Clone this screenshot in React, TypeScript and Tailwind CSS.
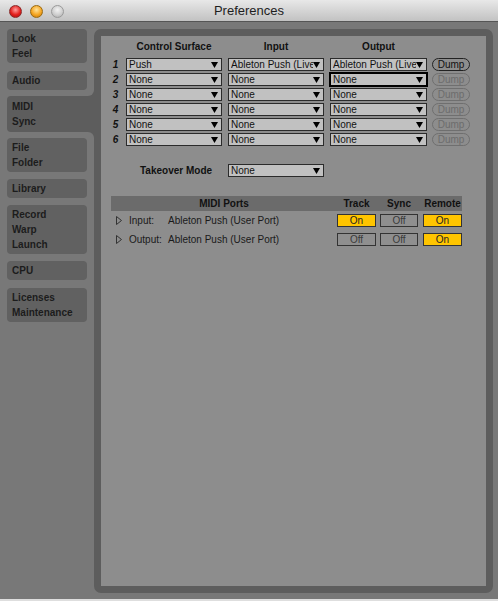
import clsx from "clsx";

const font = "font-['Liberation_Sans',Arial,sans-serif]";

function Arrow() {
  return (
    <svg width="7" height="6" viewBox="0 0 7 6" className="shrink-0">
      <polygon points="0,0 7,0 3.5,6" fill="#000" />
    </svg>
  );
}

function Select({ value, w, focused }: { value: string; w: string; focused?: boolean }) {
  return (
    <div
      className={clsx(
        "flex h-[13px] items-center border bg-[#c1c1c1] pl-[2px] pr-[3px]",
        w,
        focused ? "border-black outline outline-1 outline-black" : "border-[#2b2b2b]"
      )}
    >
      <span className="flex-1 overflow-hidden whitespace-nowrap text-[10px] leading-[11px] text-[#111]">
        {value}
      </span>
      <Arrow />
    </div>
  );
}

function Dump({ active }: { active?: boolean }) {
  return (
    <div
      className={clsx(
        "flex h-[13px] w-[38px] items-center justify-center rounded-full border text-[10px] leading-[11px]",
        active ? "border-[#222] text-[#111]" : "border-[#6f6f6f] text-[#6c6c6c]"
      )}
    >
      Dump
    </div>
  );
}

function Toggle({ on, w }: { on: boolean; w: string }) {
  return (
    <div
      className={clsx(
        "flex h-[13px] items-center justify-center border border-[#333] text-[10px] leading-[11px]",
        w,
        on ? "bg-[#ffc500] text-[#222]" : "bg-[#8f8f8f] text-[#3a3a3a]"
      )}
    >
      {on ? "On" : "Off"}
    </div>
  );
}

function Tab({ lines, className }: { lines: string[]; className?: string }) {
  return (
    <div
      className={clsx(
        "w-[80px] rounded-[4px] bg-[#616161] px-[5px] py-[2px] text-[10px] font-bold leading-[15px] text-[#1c1c1c]",
        className
      )}
    >
      {lines.map((l) => (
        <div key={l}>{l}</div>
      ))}
    </div>
  );
}

const surfaces = [
  { n: 1, cs: "Push", input: "Ableton Push (Live Port)", output: "Ableton Push (Live Port)" },
  { n: 2, cs: "None", input: "None", output: "None" },
  { n: 3, cs: "None", input: "None", output: "None" },
  { n: 4, cs: "None", input: "None", output: "None" },
  { n: 5, cs: "None", input: "None", output: "None" },
  { n: 6, cs: "None", input: "None", output: "None" },
];

const ports = [
  { label: "Input:", name: "Ableton Push (User Port)", track: true, sync: false, remote: true },
  { label: "Output:", name: "Ableton Push (User Port)", track: false, sync: false, remote: true },
];

export default function App() {
  return (
    <div className={clsx("flex h-[601px] w-[498px] flex-col overflow-hidden bg-[#787878]", font)}>
      {/* Title bar */}
      <div className="grid h-[22px] shrink-0 grid-cols-[1fr_auto_1fr] items-center border-b border-[#555] bg-gradient-to-b from-[#e8e8e8] to-[#c2c2c2]">
        <div className="flex items-center gap-[8px] pl-[9px] pt-[2px]">
          <div className="h-[13px] w-[13px] rounded-full border border-[#8a2a2a] bg-[radial-gradient(circle_at_50%_35%,#ff9d9d,#e3201d_55%,#a50d0b)]" />
          <div className="h-[13px] w-[13px] rounded-full border border-[#9a6a10] bg-[radial-gradient(circle_at_50%_35%,#ffe39a,#f5a623_55%,#c07208)]" />
          <div className="h-[13px] w-[13px] rounded-full border border-[#9a9a9a] bg-[radial-gradient(circle_at_50%_35%,#f2f2f2,#cfcfcf_55%,#a9a9a9)]" />
        </div>
        <div className="text-[13px] leading-[21px] text-[#1e1e1e]">Preferences</div>
        <div />
      </div>

      {/* Body */}
      <div className="flex flex-1 pt-[7px]">
        {/* Sidebar */}
        <div className="flex w-[94px] shrink-0 flex-col pl-[7px]">
          <Tab lines={["Look", "Feel"]} />
          <Tab lines={["Audio"]} className="mt-[8px]" />
          <div className="relative mt-[6px] h-[36px] w-[87px] rounded-l-[4px] bg-[#5d5d5d] px-[5px] pt-[3px] text-[10px] font-bold leading-[15px] text-[#1c1c1c]">
            <div className="absolute right-0 top-[-6px] h-[6px] w-[6px] bg-[#5d5d5d]">
              <div className="h-full w-full rounded-br-[6px] bg-[#787878]" />
            </div>
            <div className="absolute bottom-[-6px] right-0 h-[6px] w-[6px] bg-[#5d5d5d]">
              <div className="h-full w-full rounded-tr-[6px] bg-[#787878]" />
            </div>
            <div>MIDI</div>
            <div>Sync</div>
          </div>
          <Tab lines={["File", "Folder"]} className="mt-[6px]" />
          <Tab lines={["Library"]} className="mt-[7px]" />
          <Tab lines={["Record", "Warp", "Launch"]} className="mt-[7px]" />
          <Tab lines={["CPU"]} className="mt-[7px]" />
          <Tab lines={["Licenses", "Maintenance"]} className="mt-[8px]" />
        </div>

        {/* Panel */}
        <div className="flex flex-1 flex-col">
          <div className="mr-[5px] h-[564px] rounded-[7px] border-[7px] border-[#5d5d5d] bg-[#8d8d8d]">
            {/* Control surfaces */}
            <div className="grid grid-cols-[25px_102px_102px_102px_38px] gap-y-[2px] pt-[5px] text-[10px] text-[#111]">
              <div />
              <div className="mb-[3px] w-[96px] text-center font-bold leading-[12px]">Control Surface</div>
              <div className="mb-[3px] w-[96px] text-center font-bold leading-[12px]">Input</div>
              <div className="mb-[3px] w-[97px] text-center font-bold leading-[12px]">Output</div>
              <div />
              {surfaces.map((s) => (
                <div key={s.n} className="contents">
                  <div className="pl-[8px] pr-[4px] text-center font-bold italic leading-[13px]">{s.n}</div>
                  <Select value={s.cs} w="w-[96px]" />
                  <Select value={s.input} w="w-[96px]" />
                  <Select value={s.output} w="w-[97px]" focused={s.n === 2} />
                  <Dump active={s.n === 1} />
                </div>
              ))}
            </div>

            {/* Takeover mode */}
            <div className="mt-[18px] flex items-center pl-[39px] text-[10px] text-[#111]">
              <div className="w-[88px] font-bold leading-[13px]">Takeover Mode</div>
              <Select value="None" w="w-[96px]" />
            </div>

            {/* MIDI ports */}
            <div className="ml-[10px] mt-[19px] w-[351px] text-[10px] text-[#111]">
              <div className="flex h-[15px] items-center bg-[#6b6b6b] font-bold">
                <div className="w-[226px] text-center">MIDI Ports</div>
                <div className="w-[39px] text-center">Track</div>
                <div className="ml-[4px] w-[38px] text-center">Sync</div>
                <div className="ml-[5px] w-[39px] text-center">Remote</div>
              </div>
              {ports.map((p) => (
                <div key={p.label} className="flex h-[19px] items-center">
                  <div className="flex w-[226px] items-center">
                    <div className="w-[18px] pl-[5px]">
                      <svg width="6" height="9" viewBox="0 0 6 9">
                        <polygon points="0.5,0.5 5.5,4.5 0.5,8.5" fill="none" stroke="#333" strokeWidth="1" />
                      </svg>
                    </div>
                    <div className="w-[39px] text-[#1a1a1a]">{p.label}</div>
                    <div className="text-[#1a1a1a]">{p.name}</div>
                  </div>
                  <Toggle on={p.track} w="w-[39px]" />
                  <div className="ml-[4px]">
                    <Toggle on={p.sync} w="w-[38px]" />
                  </div>
                  <div className="ml-[5px]">
                    <Toggle on={p.remote} w="w-[39px]" />
                  </div>
                </div>
              ))}
            </div>
          </div>
        </div>
      </div>
      <div className="h-[2px] shrink-0 bg-[#dedede]" />
    </div>
  );
}
